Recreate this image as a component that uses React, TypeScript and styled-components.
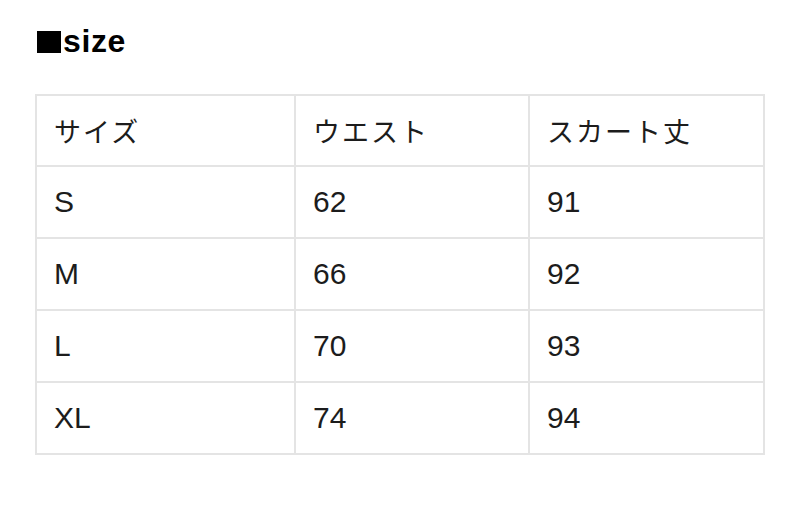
import React from "react";
import styled, { createGlobalStyle } from "styled-components";

const Global = createGlobalStyle`
  html, body { margin: 0; padding: 0; background: #fff; }
  body { font-family: "Liberation Sans", "Noto Sans CJK JP", sans-serif; color: #1a1a1a; }
`;

const Page = styled.div`
  width: 800px;
  height: 518px;
  box-sizing: border-box;
  padding: 25px 35px 0 35px;
`;

const Title = styled.h2`
  margin: 0 0 37px 2px;
  font-size: 32px;
  font-weight: 700;
  line-height: 32px;
  height: 32px;
  letter-spacing: 0.6px;
  display: flex;
  align-items: center;
  color: #000;
`;

const Square = styled.span`
  display: inline-block;
  width: 24px;
  height: 22px;
  background: #000;
  margin-right: 2px;
  margin-top: 2px;
`;

const Table = styled.table`
  width: 730px;
  border-collapse: collapse;
  border: 2px solid #e4e4e4;
`;

const Row = styled.tr<{ $head?: boolean }>`
  height: ${(p) => (p.$head ? 71 : 72)}px;
`;

const Cell = styled.td<{ $w?: number }>`
  border: 2px solid #e4e4e4;
  padding: 0 0 0 17px;
  font-size: 30px;
  color: #1c1c1c;
  vertical-align: middle;
  width: ${(p) => (p.$w ? `${p.$w}px` : "auto")};
  font-family: "Liberation Sans", "Noto Sans CJK JP", sans-serif;
`;

const JaText = styled.span`
  font-family: "Noto Sans CJK JP", sans-serif;
  font-size: 27px;
  letter-spacing: 2px;
`;

const rows = [
  ["S", "62", "91"],
  ["M", "66", "92"],
  ["L", "70", "93"],
  ["XL", "74", "94"],
];

export default function App() {
  return (
    <>
      <Global />
      <Page>
        <Title>
          <Square />
          size
        </Title>
        <Table>
          <tbody>
            <Row $head>
              <Cell $w={240}><JaText>サイズ</JaText></Cell>
              <Cell $w={215}><JaText>ウエスト</JaText></Cell>
              <Cell><JaText>スカート丈</JaText></Cell>
            </Row>
            {rows.map((r) => (
              <Row key={r[0]}>
                {r.map((c, i) => (
                  <Cell key={i}>{c}</Cell>
                ))}
              </Row>
            ))}
          </tbody>
        </Table>
      </Page>
    </>
  );
}
